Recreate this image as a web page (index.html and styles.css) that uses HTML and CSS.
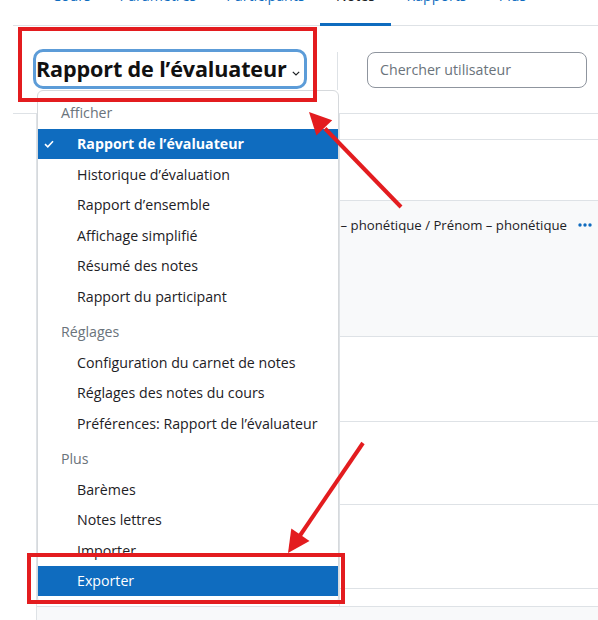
FILE: index.html
```html
<!DOCTYPE html>
<html lang="fr">
<head>
<meta charset="utf-8">
<title>Rapport de l’évaluateur</title>
<link rel="stylesheet" href="styles.css">
</head>
<body>
<div class="page">
  <nav class="tabbar">
    <a class="tab t1"><span>Cours</span></a>
    <a class="tab t2"><span>Paramètres</span></a>
    <a class="tab t3"><span>Participants</span></a>
    <a class="tab t4 active"><span>Notes</span></a>
    <a class="tab t5"><span>Rapports</span></a>
    <a class="tab t6"><span>Plus</span></a>
  </nav>

  <div class="toolbar">
    <div class="select">
      <span class="select-label">Rapport de l’évaluateur</span>
      <svg class="chev" width="8" height="5" viewBox="0 0 8 5"><path d="M0.8 0.8 L4 4 L7.2 0.8" fill="none" stroke="#1d2125" stroke-width="1.2"/></svg>
    </div>
    <div class="sep"></div>
    <div class="search">Chercher utilisateur</div>
  </div>

  <div class="table">
    <div class="row r1"><div class="c1"></div><div class="c2"></div></div>
    <div class="row r2"><div class="c1"></div><div class="c2"></div></div>
    <div class="row r3 shaded">
      <div class="c1"></div>
      <div class="c2">
        <div class="head">
          <span class="head-text">Nom – phonétique / Prénom – phonétique</span>
          <svg class="dots" width="14" height="4" viewBox="0 0 14 4"><circle cx="2" cy="2" r="1.7" fill="#0f6cbf"/><circle cx="7" cy="2" r="1.7" fill="#0f6cbf"/><circle cx="12" cy="2" r="1.7" fill="#0f6cbf"/></svg>
        </div>
      </div>
    </div>
    <div class="row r4"><div class="c1"></div><div class="c2"></div></div>
    <div class="row r5"><div class="c1"></div><div class="c2"></div></div>
    <div class="row r6"><div class="c1"></div><div class="c2"></div></div>
    <div class="row r7"><div class="c1"></div><div class="c2"></div></div>
    <div class="foot"></div>
  </div>

  <div class="dropdown">
    <div class="dd-header">Afficher</div>
    <div class="dd-item selected">
      <svg class="check" width="10" height="8" viewBox="0 0 10 8"><path d="M1 4.2 L3.8 6.8 L9 1.2" fill="none" stroke="#fff" stroke-width="1.6"/></svg>
      <span>Rapport de l’évaluateur</span>
    </div>
    <div class="dd-item">Historique d’évaluation</div>
    <div class="dd-item">Rapport d’ensemble</div>
    <div class="dd-item">Affichage simplifié</div>
    <div class="dd-item">Résumé des notes</div>
    <div class="dd-item">Rapport du participant</div>
    <div class="dd-header group">Réglages</div>
    <div class="dd-item">Configuration du carnet de notes</div>
    <div class="dd-item">Réglages des notes du cours</div>
    <div class="dd-item">Préférences: Rapport de l’évaluateur</div>
    <div class="dd-header group">Plus</div>
    <div class="dd-item">Barèmes</div>
    <div class="dd-item">Notes lettres</div>
    <div class="dd-item">Importer</div>
    <div class="dd-item hover">Exporter</div>
  </div>

  <svg class="annot" width="598" height="620" viewBox="0 0 598 620">
    <rect x="20" y="29" width="295" height="71" fill="none" stroke="#e31c1f" stroke-width="4"/>
    <rect x="29" y="555" width="314" height="47" fill="none" stroke="#e31c1f" stroke-width="4"/>
    <line x1="401" y1="207" x2="325" y2="128.5" stroke="#e31c1f" stroke-width="4"/>
    <polygon points="309,112 332.2,120.2 316.4,135.5" fill="#e31c1f"/>
    <line x1="363" y1="443" x2="300" y2="535.5" stroke="#e31c1f" stroke-width="4"/>
    <polygon points="288,553 309.5,541 291.3,528.6" fill="#e31c1f"/>
  </svg>
</div>
</body>
</html>
```

FILE: styles.css
```css
html, body {
  margin: 0;
  padding: 0;
  background: #fff;
}
body {
  font-family: "Open Sans", "Noto Sans", "DejaVu Sans", sans-serif;
  font-size: 14.2px;
  color: #1d2125;
}
.page {
  position: relative;
  width: 598px;
  height: 620px;
  overflow: hidden;
}

/* Tabs */
.tabbar {
  display: flex;
  align-items: flex-start;
  height: 25px;
  margin-left: 13px;
  padding-left: 25px;
  border-bottom: 1px solid #dee2e6;
}
.tab {
  display: block;
  box-sizing: border-box;
  height: 26px;
  text-align: center;
  color: #0f6cbf;
  white-space: nowrap;
}
.tab span {
  display: block;
  margin-top: -14.5px;
  line-height: 20px;
}
.t1 { width: 67px; }
.t2 { width: 106px; }
.t3 { width: 109px; }
.t4 { width: 71px; }
.t5 { width: 91px; }
.t6 { width: 61px; }
.tab.active {
  color: #1d2125;
  border-bottom: 3px solid #0f6cbf;
}

/* Toolbar */
.toolbar {
  display: flex;
  align-items: flex-start;
  height: 88px;
  box-sizing: border-box;
  margin-left: 13px;
  padding: 23px 0 0 20px;
  border-bottom: 1px solid #dee2e6;
}
.select {
  display: flex;
  align-items: center;
  box-sizing: border-box;
  width: 274px;
  height: 40px;
  padding: 0 4px 0 0;
  border: 3px solid #5c9cd8;
  border-radius: 10px;
}
.select-label {
  font-weight: 700;
  font-size: 21.6px;
  line-height: 28px;
  color: #111;
  white-space: nowrap;
  letter-spacing: -0.15px;
}
.chev {
  margin-left: auto;
  margin-top: 8px;
}
.sep {
  width: 1px;
  height: 38px;
  margin: 3px 0 0 30px;
  background: #dee2e6;
}
.search {
  box-sizing: border-box;
  width: 220px;
  height: 36px;
  margin: 3px 0 0 29px;
  padding-left: 12px;
  border: 1px solid #8f959e;
  border-radius: 8px;
  line-height: 34px;
  color: #6a737b;
  font-size: 14.2px;
}

/* Table */
.table {
  margin-left: 36px;
  border-left: 1px solid #dee2e6;
}
.row {
  display: flex;
  border-bottom: 1px solid #dee2e6;
}
.c1 {
  width: 302px;
  flex: none;
  border-right: 1px solid #dee2e6;
}
.c2 {
  flex: 1;
  min-width: 0;
  overflow: hidden;
}
.r1 { height: 25px; }
.r2 { height: 60px; }
.r3 { height: 135px; }
.r4 { height: 84px; }
.r5 { height: 82px; }
.r6 { height: 83px; }
.r7 { height: 17px; }
.shaded { background: #f8f9fa; }
.head {
  display: flex;
  justify-content: flex-end;
  align-items: center;
  height: 20px;
  margin-top: 14px;
  padding-right: 6px;
  white-space: nowrap;
}
.head-text {
  flex: none;
  font-size: 13.2px;
  line-height: 20px;
}
.dots {
  margin-left: 11px;
  flex: none;
}
.foot {
  height: 20px;
  background: #f8f9fa;
}

/* Dropdown */
.dropdown {
  position: absolute;
  left: 37px;
  top: 90px;
  width: 302px;
  box-sizing: border-box;
  padding: 7px 0;
  background: #fff;
  border: 1px solid #d6d9dc;
  border-radius: 6px;
}
.dd-header {
  height: 30.5px;
  line-height: 30.5px;
  padding-left: 23px;
  color: #6a737b;
  white-space: nowrap;
}
.dd-header.group {
  margin-top: 5px;
}
.dd-item {
  display: flex;
  align-items: center;
  height: 30.5px;
  padding-left: 39px;
  white-space: nowrap;
  color: #1d2125;
}
.dd-item.selected {
  padding-left: 0;
  background: #0f6cbf;
  color: #fff;
  font-weight: 700;
}
.check {
  flex: none;
  margin: 0 23px 0 6px;
}
.dd-item.hover {
  background: #0f6cbf;
  color: #fff;
}

/* Annotation overlay */
.annot {
  position: absolute;
  left: 0;
  top: 0;
  pointer-events: none;
}
```
